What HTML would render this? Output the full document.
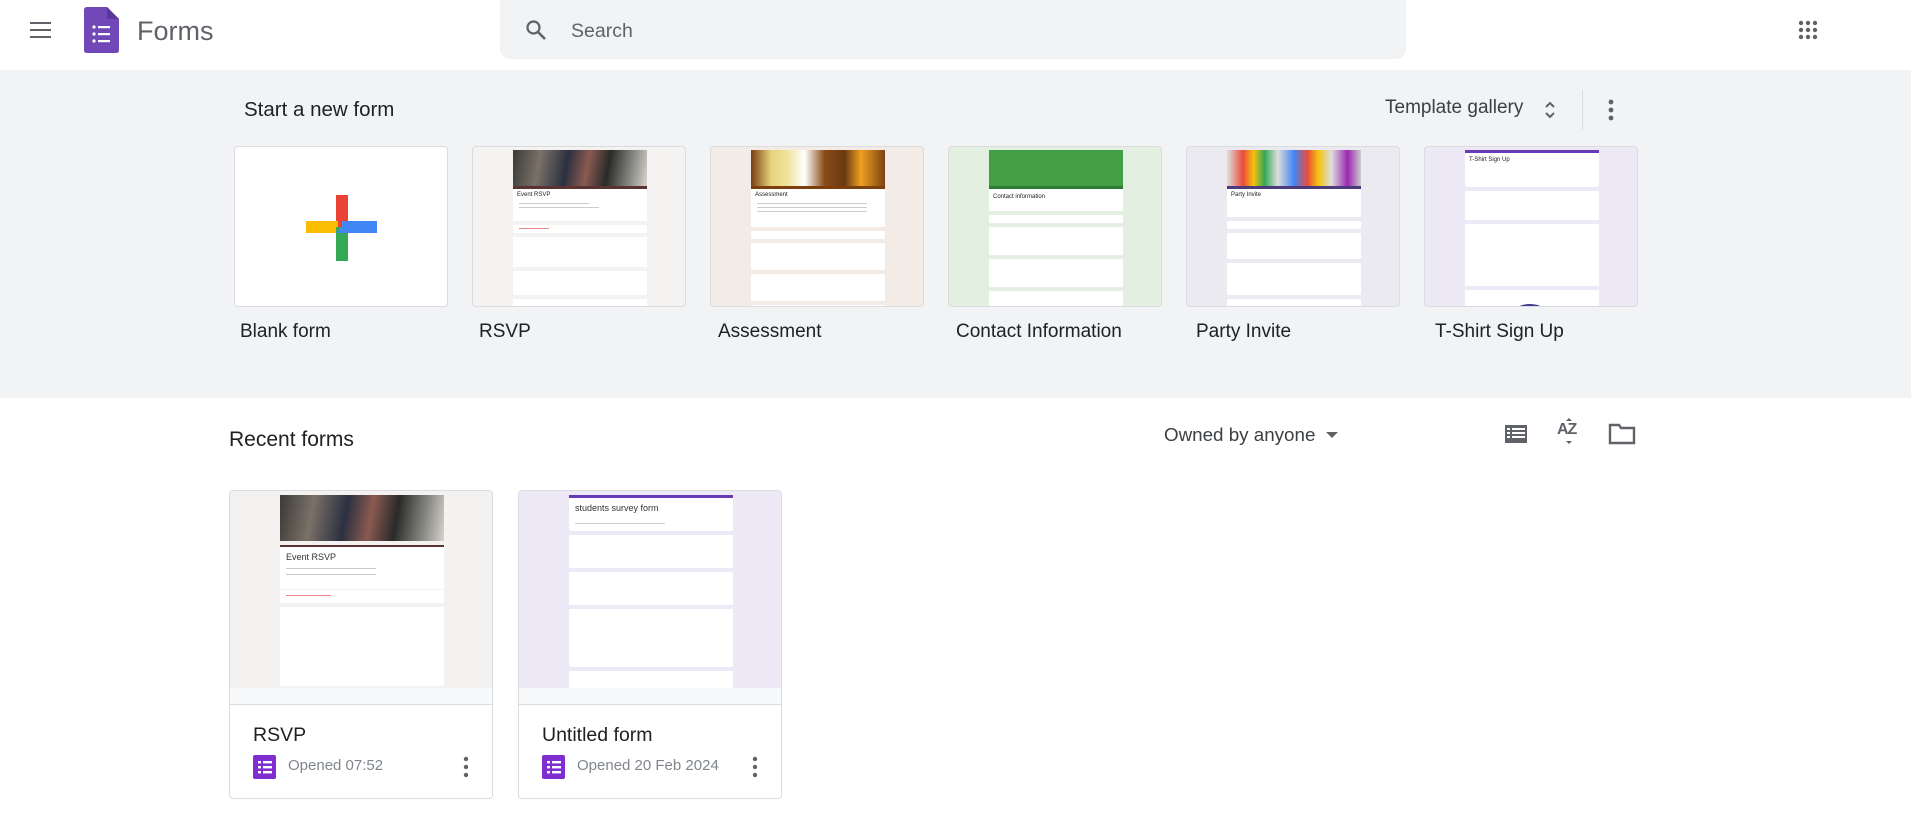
<!DOCTYPE html>
<html><head><meta charset="utf-8"><style>
*{margin:0;padding:0;box-sizing:border-box}
body{width:1915px;height:821px;background:#fff;font-family:"Liberation Sans",Arial,sans-serif;position:relative;overflow:hidden;color:#202124}
.a{position:absolute}
.band{left:0;top:70px;width:1911px;height:328px;background:#f1f3f4}
.tc{position:absolute;top:146px;width:214px;height:161px;border:1px solid #dadce0;border-radius:4px;overflow:hidden}
.col{position:absolute;left:40px;width:134px;top:3px;bottom:0}
.img{height:36px}
.bar{height:3px}
.blk{background:#fff;margin-bottom:4px;border-radius:1px;position:relative}
.ln{position:absolute;height:2px;background:#ccc;left:6px}
.lbl{position:absolute;top:321px;font-size:19px;color:#202124}
.rc{position:absolute;top:490px;width:264px;height:309px;border:1px solid #dadce0;border-radius:4px;overflow:hidden;background:#fff}
.th{position:absolute;left:0;top:0;width:100%;height:197px}
.foot{position:absolute;left:0;top:197px;width:100%;height:17px;background:#f8f9fa;border-bottom:1px solid #dadce0}
.rt{position:absolute;left:23px;top:233px;font-size:19.5px;color:#202124}
.meta{position:absolute;left:58px;top:266px;font-size:15px;color:#80868b}
.fi{position:absolute;left:23px;top:264px}
.dots{position:absolute;left:231px;top:265px}
</style></head><body>

<svg class="a" style="left:29px;top:21px" width="24" height="18" viewBox="0 0 24 18"><rect x="1" y="1" width="21" height="2" fill="#5f6368"/><rect x="1" y="8" width="21" height="2" fill="#5f6368"/><rect x="1" y="15" width="21" height="2" fill="#5f6368"/></svg>
<svg class="a" style="left:84px;top:7px" width="35" height="46" viewBox="0 0 35 46"><path d="M3 0H23L35 12V43Q35 46 32 46H3Q0 46 0 43V3Q0 0 3 0Z" fill="#7248b9"/><path d="M23 0L35 12H26Q23 12 23 9Z" fill="#5b3798"/><g fill="#fff"><circle cx="10" cy="20" r="1.6"/><circle cx="10" cy="27" r="1.6"/><circle cx="10" cy="34" r="1.6"/><rect x="14" y="19" width="12" height="2.2"/><rect x="14" y="26" width="12" height="2.2"/><rect x="14" y="33" width="12" height="2.2"/></g></svg>
<div class="a" style="left:137px;top:16px;font-size:27px;color:#5f6368">Forms</div>
<div class="a" style="left:500px;top:0;width:906px;height:59px;background:#f1f3f4;border-radius:0 0 10px 10px"></div>
<svg class="a" style="left:524px;top:18px" width="24" height="24" viewBox="0 0 24 24"><circle cx="9.5" cy="9.5" r="6" fill="none" stroke="#5f6368" stroke-width="2.2"/><path d="M14 14L21 21" stroke="#5f6368" stroke-width="2.6"/></svg>
<div class="a" style="left:571px;top:20px;font-size:19.5px;color:#5f6368">Search</div>
<svg class="a" style="left:1798px;top:20px" width="20" height="20" viewBox="0 0 20 20" fill="#5f6368"><circle cx="3" cy="3" r="2.2"/><circle cx="10" cy="3" r="2.2"/><circle cx="17" cy="3" r="2.2"/><circle cx="3" cy="10" r="2.2"/><circle cx="10" cy="10" r="2.2"/><circle cx="17" cy="10" r="2.2"/><circle cx="3" cy="17" r="2.2"/><circle cx="10" cy="17" r="2.2"/><circle cx="17" cy="17" r="2.2"/></svg>

<div class="a band"></div>
<div class="a" style="left:244px;top:98px;font-size:20.5px;color:#202124">Start a new form</div>
<div class="a" style="left:1385px;top:97px;font-size:19px;color:#3c4043">Template gallery</div>
<svg class="a" style="left:1543px;top:99px" width="14" height="22" viewBox="0 0 14 22"><path d="M3 8L7 4L11 8M3 14L7 18L11 14" fill="none" stroke="#5f6368" stroke-width="2"/></svg>
<div class="a" style="left:1582px;top:90px;width:1px;height:40px;background:#dadce0"></div>
<svg class="a" style="left:1606px;top:98px" width="10" height="24" viewBox="0 0 10 24" fill="#5f6368"><circle cx="5" cy="4" r="2.4"/><circle cx="5" cy="12" r="2.4"/><circle cx="5" cy="20" r="2.4"/></svg>

<div class="tc" style="left:234px;background:#fff">
<svg class="a" style="left:71px;top:44px" width="72" height="72" viewBox="0 0 72 72"><rect x="30" y="4" width="12" height="32" fill="#ea4335"/><rect x="0" y="30" width="32" height="12" fill="#fbbc04"/><rect x="30" y="36" width="12" height="34" fill="#34a853"/><rect x="36" y="30" width="35" height="12" fill="#4285f4"/><path d="M30 42L42 30V42Z" fill="#4285f4"/></svg>
</div>
<div class="tc" style="left:472px;background:#f5f3f1"><div class="col">
<div class="img" style="background:linear-gradient(100deg,#3a3a36,#7a7168 20%,#2c3040 40%,#8a5a50 55%,#2a2a2a 70%,#9a9a94 90%,#d8d2cc)"></div><div class="bar" style="background:#5a3430"></div>
<div class="blk" style="height:32px"><div class="a" style="left:4px;top:3px;font-size:6px">Event RSVP</div><div class="ln" style="top:14px;width:70px;height:1px"></div><div class="ln" style="top:18px;width:80px;height:1px"></div></div>
<div class="blk" style="height:8px"><div class="ln" style="top:3px;width:30px;height:1px;background:#e88"></div></div>
<div class="blk" style="height:30px"></div><div class="blk" style="height:24px"></div><div class="blk" style="height:20px"></div></div></div>
<div class="tc" style="left:710px;background:#f3ebe5"><div class="col">
<div class="img" style="background:linear-gradient(90deg,#7a3e12,#e8d27a 15%,#f0e4a0 28%,#fff 40%,#8a4a18 55%,#6a3a12 70%,#f0a020 82%,#7a4414)"></div><div class="bar" style="background:#7b3f10"></div>
<div class="blk" style="height:38px"><div class="a" style="left:4px;top:3px;font-size:6px">Assessment</div><div class="ln" style="top:14px;width:110px;height:1px"></div><div class="ln" style="top:18px;width:110px;height:1px"></div><div class="ln" style="top:22px;width:110px;height:1px"></div></div>
<div class="blk" style="height:8px"></div><div class="blk" style="height:27px"></div><div class="blk" style="height:27px"></div><div class="blk" style="height:20px"></div></div></div>
<div class="tc" style="left:948px;background:#e3efe0"><div class="col">
<div class="img" style="background:#43a047"></div><div class="bar" style="background:#2e7d32"></div>
<div class="blk" style="height:22px"><div class="a" style="left:4px;top:5px;font-size:6px">Contact information</div></div>
<div class="blk" style="height:8px"></div><div class="blk" style="height:28px"></div><div class="blk" style="height:28px"></div><div class="blk" style="height:30px"></div></div></div>
<div class="tc" style="left:1186px;background:#ebeaf0"><div class="col">
<div class="img" style="background:linear-gradient(90deg,#e0e0e0,#e94b3c 12%,#f4c20d 20%,#34a853 28%,#ddd 38%,#4285f4 50%,#e94b3c 60%,#f4c20d 68%,#ddd 78%,#9c27b0 90%,#ccc)"></div><div class="bar" style="background:#4a3b7a"></div>
<div class="blk" style="height:28px"><div class="a" style="left:4px;top:3px;font-size:6px">Party Invite</div></div>
<div class="blk" style="height:8px"></div><div class="blk" style="height:26px"></div><div class="blk" style="height:32px"></div><div class="blk" style="height:20px"></div></div></div>
<div class="tc" style="left:1424px;background:#ede9f6"><div class="col">
<div class="bar" style="background:#673ab7"></div>
<div class="blk" style="height:34px"><div class="a" style="left:4px;top:4px;font-size:6px">T-Shirt Sign Up</div></div>
<div class="blk" style="height:29px"></div><div class="blk" style="height:62px"></div><div class="blk" style="height:30px"><div class="a" style="left:48px;top:14px;width:34px;height:20px;border-radius:50% 50% 0 0;background:#3f3a8a"></div></div></div></div>

<div class="lbl" style="left:240px">Blank form</div>
<div class="lbl" style="left:479px">RSVP</div>
<div class="lbl" style="left:718px">Assessment</div>
<div class="lbl" style="left:956px">Contact Information</div>
<div class="lbl" style="left:1196px">Party Invite</div>
<div class="lbl" style="left:1435px">T-Shirt Sign Up</div>

<div class="a" style="left:229px;top:428px;font-size:21px;color:#202124">Recent forms</div>
<div class="a" style="left:1164px;top:424px;font-size:18.8px;color:#3c4043">Owned by anyone</div>
<svg class="a" style="left:1325px;top:430px" width="14" height="10" viewBox="0 0 14 10"><path d="M1 2H13L7 8Z" fill="#5f6368"/></svg>
<svg class="a" style="left:1504px;top:424px" width="24" height="20" viewBox="0 0 24 20" fill="#5f6368"><rect x="1" y="1" width="22" height="18"/><g fill="#fff"><rect x="3" y="4" width="3" height="2"/><rect x="8" y="4" width="13" height="2"/><rect x="3" y="8" width="3" height="2"/><rect x="8" y="8" width="13" height="2"/><rect x="3" y="12" width="3" height="2"/><rect x="8" y="12" width="13" height="2"/></g></svg>
<div class="a" style="left:1557px;top:421px;font-size:16px;font-weight:bold;color:#5f6368;letter-spacing:-1px">AZ</div>
<svg class="a" style="left:1563px;top:417px" width="12" height="28" viewBox="0 0 12 28" fill="#5f6368"><path d="M3 4L6 1L9 4Z"/><path d="M3 24L6 27L9 24Z"/></svg>
<svg class="a" style="left:1608px;top:423px" width="28" height="22" viewBox="0 0 28 22"><path d="M2 2H11L13 5H26V20H2Z" fill="none" stroke="#5f6368" stroke-width="2.4"/></svg>

<div class="rc" style="left:229px"><div class="th" style="background:#f3f2f0"><div class="a" style="left:50px;top:4px;width:164px;bottom:0">
<div style="height:46px;background:linear-gradient(100deg,#3a3a36,#7a7168 20%,#2c3040 40%,#8a5a50 55%,#2a2a2a 70%,#9a9a94 90%,#d8d2cc)"></div><div style="height:2px;margin-top:4px;background:#5a3430"></div>
<div class="blk" style="height:42px;margin-bottom:0"><div class="a" style="left:6px;top:5px;font-size:9px;color:#333">Event RSVP</div><div class="ln" style="top:21px;width:90px;height:1px"></div><div class="ln" style="top:27px;width:90px;height:1px"></div></div>
<div class="blk" style="height:13px;margin-top:1px"><div class="ln" style="top:5px;width:45px;height:1px;background:#e88"></div></div>
<div class="blk" style="height:79px"></div><div class="blk" style="height:30px"></div></div></div><div class="foot"></div>
<div class="rt">RSVP</div>
<svg class="fi" width="23" height="24" viewBox="0 0 23 24"><rect width="23" height="24" rx="2" fill="#7f2fcf"/><g fill="#fff"><rect x="5" y="6" width="3" height="2.4"/><rect x="10" y="6" width="9" height="2.4"/><rect x="5" y="11" width="3" height="2.4"/><rect x="10" y="11" width="9" height="2.4"/><rect x="5" y="16" width="3" height="2.4"/><rect x="10" y="16" width="9" height="2.4"/></g></svg>
<div class="meta">Opened 07:52</div>
<svg class="dots" width="10" height="22" viewBox="0 0 10 22" fill="#5f6368"><circle cx="5" cy="3" r="2.2"/><circle cx="5" cy="11" r="2.2"/><circle cx="5" cy="19" r="2.2"/></svg></div>

<div class="rc" style="left:518px"><div class="th" style="background:#ede9f6"><div class="a" style="left:50px;top:4px;width:164px;bottom:0">
<div style="height:3px;background:#673ab7"></div>
<div class="blk" style="height:33px;margin-bottom:4px"><div class="a" style="left:6px;top:5px;font-size:9px;color:#333">students survey form</div><div class="ln" style="top:25px;width:90px;height:1px"></div></div>
<div class="blk" style="height:33px"></div><div class="blk" style="height:33px"></div><div class="blk" style="height:58px"></div><div class="blk" style="height:20px"></div></div></div><div class="foot"></div>
<div class="rt">Untitled form</div>
<svg class="fi" width="23" height="24" viewBox="0 0 23 24"><rect width="23" height="24" rx="2" fill="#7f2fcf"/><g fill="#fff"><rect x="5" y="6" width="3" height="2.4"/><rect x="10" y="6" width="9" height="2.4"/><rect x="5" y="11" width="3" height="2.4"/><rect x="10" y="11" width="9" height="2.4"/><rect x="5" y="16" width="3" height="2.4"/><rect x="10" y="16" width="9" height="2.4"/></g></svg>
<div class="meta">Opened 20 Feb 2024</div>
<svg class="dots" width="10" height="22" viewBox="0 0 10 22" fill="#5f6368"><circle cx="5" cy="3" r="2.2"/><circle cx="5" cy="11" r="2.2"/><circle cx="5" cy="19" r="2.2"/></svg></div>
</body></html>
